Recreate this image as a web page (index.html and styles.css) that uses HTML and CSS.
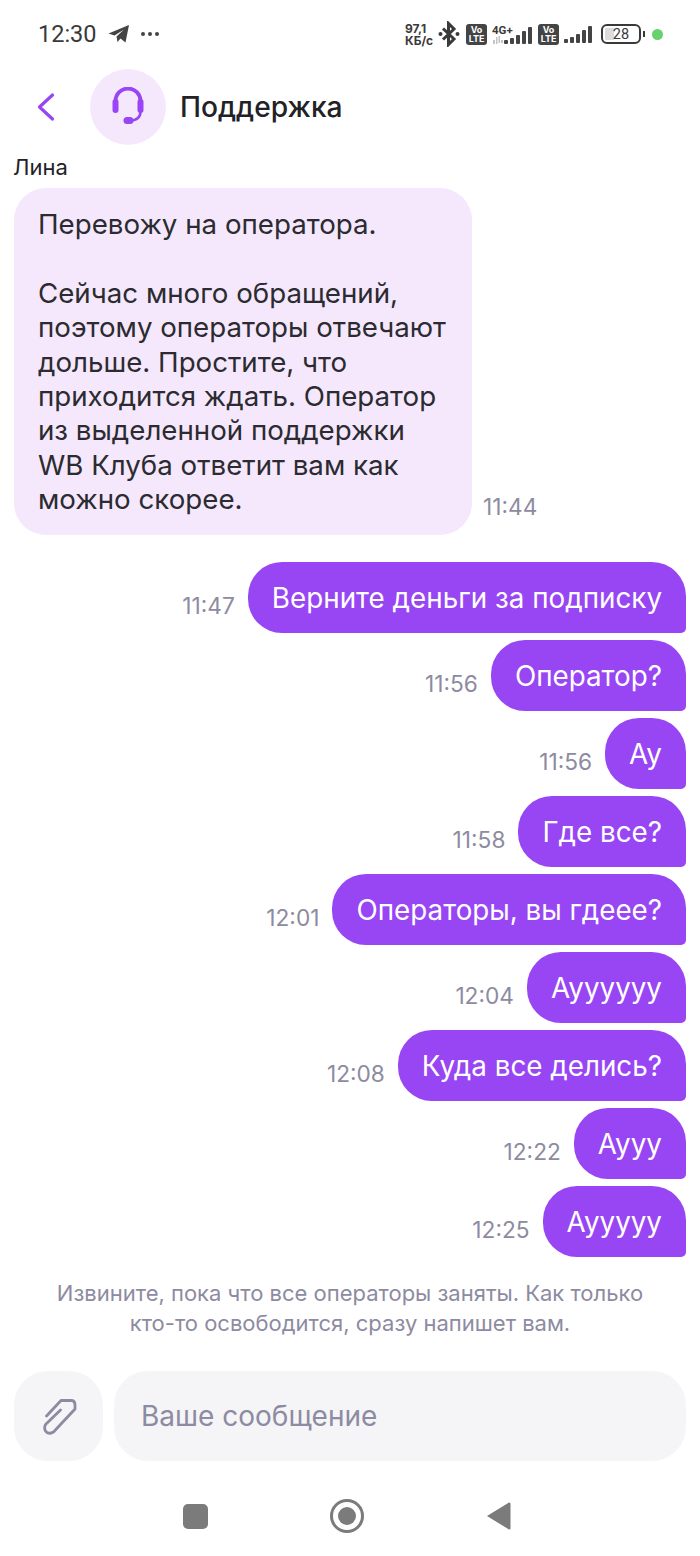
FILE: index.html
```html
<!DOCTYPE html>
<html lang="ru">
    <head>
        <meta charset="UTF-8">
        <meta name="viewport" content="width=device-width, initial-scale=1.0">
        <title>Поддержка</title>
        <link rel="stylesheet" href="styles.css">
    </head>
    <body>
        <div class="status-bar">
            <div class="status-left">
                <span class="clock">12:30</span>
                <svg class="tg-icon" width="22" height="20" viewBox="0 0 22 20"><path d="M0.5 9.5 L21 1 L17.500 18.500 L12.500 14.500 L9.500 18 L8.500 12.500 L16 5.500 L6.500 11.500 Z" fill="#444"/></svg>
                <span class="dots"><i></i><i></i><i></i></span>
            </div>
            <div class="status-right">
                <div class="speed"><span>97,1</span><span>КБ/с</span></div>
                <svg class="bt-icon" width="22" height="26" viewBox="0 0 22 26"><path d="M5 7.500 L16 18 L10.500 23.500 V2.500 L16 8 L5 18.500" fill="none" stroke="#3a3a3a" stroke-width="3"/><circle cx="2.500" cy="13" r="2" fill="#3a3a3a"/><circle cx="19.500" cy="13" r="2" fill="#3a3a3a"/></svg>
                <div class="volte"><span>Vo</span><span>LTE</span></div>
                <div class="net">
                    <span class="net-label">4G+</span>
                    <div class="net-row">
                        <svg width="11" height="8" viewBox="0 0 11 8"><path d="M1 4h2v4H1zM4 1h1.500v7H4zM6.500 0h1.500v7H6.500zM9 4h2v3H9z" fill="#c4c4c4"/></svg>
                        <div class="bars"><i class="b1"></i><i class="b2"></i><i class="b3"></i><i class="b4"></i><i class="b5"></i></div>
                    </div>
                </div>
                <div class="volte"><span>Vo</span><span>LTE</span></div>
                <div class="bars bars-big"><i class="b1"></i><i class="b2"></i><i class="b3"></i><i class="b4"></i><i class="b5"></i></div>
                <div class="battery"><div class="battery-fill"></div><span>28</span></div>
                <div class="battery-tip"></div>
                <div class="green-dot"></div>
            </div>
        </div>

        <div class="header">
            <svg class="back-icon" width="20" height="30" viewBox="0 0 20 30"><path d="M15.500 3 L2.500 15 L15.500 27" fill="none" stroke="#9846f3" stroke-width="3.200" stroke-linecap="round" stroke-linejoin="round"/></svg>
            <div class="avatar">
                <svg width="36" height="40" viewBox="0 0 36 40"><path d="M5.500 14 A12.500 12.500 0 0 1 30.500 14" fill="none" stroke="#9846f3" stroke-width="3.800"/><path d="M30.500 24 C30.500 31 26 33.500 20 33.500" fill="none" stroke="#9846f3" stroke-width="2.600"/><rect x="2.500" y="12" width="6" height="14" rx="3" fill="#9846f3"/><rect x="27.500" y="12" width="6" height="14" rx="3" fill="#9846f3"/><rect x="13.500" y="30" width="10" height="7" rx="3.500" fill="#9846f3"/></svg>
            </div>
            <div class="header-title">Поддержка</div>
        </div>

        <div class="chat">
            <div class="sender">Лина</div>
            <div class="msg-left">
                <div class="bubble-left">
                    <p>Перевожу на оператора.</p>
                    <p>Сейчас много обращений, поэтому операторы отвечают дольше. Простите, что приходится ждать. Оператор из выделенной поддержки WB Клуба ответит вам как можно скорее.</p>
                </div>
                <span class="time">11:44</span>
            </div>

            <div class="my-messages">
                <div class="msg-right"><span class="time">11:47</span><div class="bubble-right">Верните деньги за подписку</div></div>
                <div class="msg-right"><span class="time">11:56</span><div class="bubble-right">Оператор?</div></div>
                <div class="msg-right"><span class="time">11:56</span><div class="bubble-right">Ау</div></div>
                <div class="msg-right"><span class="time">11:58</span><div class="bubble-right">Где все?</div></div>
                <div class="msg-right"><span class="time">12:01</span><div class="bubble-right">Операторы, вы гдеее?</div></div>
                <div class="msg-right"><span class="time">12:04</span><div class="bubble-right">Ауууууу</div></div>
                <div class="msg-right"><span class="time">12:08</span><div class="bubble-right">Куда все делись?</div></div>
                <div class="msg-right"><span class="time">12:22</span><div class="bubble-right">Аууу</div></div>
                <div class="msg-right"><span class="time">12:25</span><div class="bubble-right">Аууууу</div></div>
            </div>

            <div class="notice">Извините, пока что все операторы заняты. Как только кто-то освободится, сразу напишет вам.</div>
        </div>

        <div class="input-row">
            <div class="attach">
                <svg width="38" height="40" viewBox="0 0 38 40"><path d="M6.500 20 L21 4.500 H31 Q35 4.500 35 9 V13 L13.500 36 Q8 39 5.500 35 Q3.500 31 6 28 L20.500 14" fill="none" stroke="#8d8ba1" stroke-width="2.800" stroke-linecap="round" stroke-linejoin="round"/></svg>
            </div>
            <div class="input-box">Ваше сообщение</div>
        </div>

        <div class="nav-bar">
            <div class="nav-square"></div>
            <div class="nav-circle"><div class="nav-circle-inner"></div></div>
            <svg width="26" height="30" viewBox="0 0 26 30"><path d="M1 15 L23 1.500 Q24.500 1 24.500 3 V27 Q24.500 29 23 28.500 Z" fill="#7b7b7b"/></svg>
        </div>
    </body>
</html>
```

FILE: styles.css
```css
*{
    box-sizing: border-box;
    font-family: Inter, "Noto Sans", sans-serif;
}

body{
    margin: 0;
    width: 700px;
    height: 1556px;
    background-color: white;
    overflow: hidden;
}

p{
    margin: 0;
}

.status-bar{
    height: 68px;
    padding: 0 37px 0 38px;
    display: flex;
    justify-content: space-between;
    align-items: center;
    color: #3a3a3a;
}

.status-left{
    display: flex;
    align-items: center;
}

.clock{
    font-family: Roboto, sans-serif;
    font-size: 23.5px;
    margin-right: 11px;
}

.tg-icon{
    margin-right: 11px;
}

.dots{
    display: flex;
    gap: 3px;
}

.dots i{
    width: 4px;
    height: 4px;
    border-radius: 50%;
    background-color: #444;
}

.status-right{
    display: flex;
    align-items: center;
}

.speed{
    display: flex;
    flex-direction: column;
    gap: 1px;
    width: 31px;
    font-family: Roboto, sans-serif;
    font-size: 12px;
    font-weight: 700;
    line-height: 11px;
    margin-right: 2px;
}

.bt-icon{
    margin-right: 6px;
}

.volte{
    width: 21px;
    height: 21px;
    border-radius: 3px;
    background-color: #444;
    color: white;
    display: flex;
    flex-direction: column;
    align-items: center;
    font-family: Roboto, sans-serif;
    font-size: 9px;
    font-weight: 700;
    line-height: 9px;
    padding-top: 1px;
    margin-right: 5px;
}

.net{
    width: 40px;
    margin-right: 6px;
    padding-top: 1px;
}

.net-label{
    display: block;
    font-family: Roboto, sans-serif;
    font-size: 11.5px;
    font-weight: 700;
    line-height: 10px;
}

.net-row{
    display: flex;
    align-items: flex-end;
    gap: 1px;
    margin-top: -8px;
}

.bars{
    display: flex;
    align-items: flex-end;
    gap: 2px;
}

.bars i{
    width: 4px;
    background-color: #444;
    border-radius: 1px;
}

.bars .b1{ height: 4px; }
.bars .b2{ height: 6px; }
.bars .b3{ height: 9px; }
.bars .b4{ height: 13px; }
.bars .b5{ height: 17px; }

.bars-big{
    margin-right: 9px;
}

.battery{
    position: relative;
    width: 40px;
    height: 20px;
    border: 2px solid #3a3a3a;
    border-radius: 6px;
    display: flex;
    align-items: center;
    justify-content: center;
}

.battery-fill{
    position: absolute;
    left: 2px;
    top: 2px;
    bottom: 2px;
    width: 9px;
    background-color: #dcdcdc;
    border-radius: 1px;
}

.battery span{
    position: relative;
    font-family: Roboto, sans-serif;
    font-size: 14.5px;
}

.battery-tip{
    width: 2px;
    height: 6px;
    margin-left: 2px;
    margin-right: 7px;
    background-color: #3a3a3a;
}

.green-dot{
    width: 11px;
    height: 11px;
    border-radius: 50%;
    background-color: #67d06f;
}

.header{
    height: 78px;
    padding-left: 37px;
    display: flex;
    align-items: center;
}

.back-icon{
    margin-right: 33px;
}

.avatar{
    width: 76px;
    height: 76px;
    border-radius: 50%;
    background-color: #f5e8fd;
    display: flex;
    align-items: center;
    justify-content: center;
    margin-right: 14px;
}

.header-title{
    font-size: 28.2px;
    font-weight: 500;
    color: #222226;
}

.chat{
    padding: 9px 14px 0;
}

.sender{
    margin-left: -1px;
    font-size: 22px;
    line-height: 24px;
    color: #222226;
    margin-bottom: 9px;
}

.msg-left{
    display: flex;
    align-items: flex-end;
    gap: 11px;
}

.bubble-left{
    width: 458px;
    height: 347px;
    padding: 19px 20px 0 24px;
    background-color: #f5e8fd;
    border-radius: 32px;
    font-size: 27.7px;
    line-height: 34.4px;
    color: #2b2b30;
}

.bubble-left p + p{
    margin-top: 34.4px;
}

.time{
    font-size: 22.7px;
    color: #8d8ba1;
    padding-bottom: 14px;
}

.msg-left .time{
    padding-bottom: 15px;
}

.my-messages{
    margin-top: 27px;
    display: flex;
    flex-direction: column;
    gap: 7px;
}

.msg-right{
    display: flex;
    justify-content: flex-end;
    align-items: flex-end;
    gap: 13px;
}

.bubble-right{
    height: 71px;
    padding: 0 24px;
    display: flex;
    align-items: center;
    background-color: #9846f3;
    color: white;
    font-size: 27.8px;
    border-radius: 34px 34px 5px 34px;
}

.notice{
    margin-top: 21px;
    padding: 0 40px;
    text-align: center;
    font-size: 22px;
    line-height: 30px;
    color: #8d8ba1;
}

.input-row{
    margin-top: 33px;
    padding: 0 14px;
    display: flex;
    gap: 11px;
}

.attach{
    width: 89px;
    height: 90px;
    border-radius: 34px;
    background-color: #f5f5f8;
    display: flex;
    align-items: center;
    justify-content: center;
}

.input-box{
    flex: 1;
    height: 90px;
    border-radius: 34px;
    background-color: #f5f5f8;
    display: flex;
    align-items: center;
    padding-left: 27px;
    font-size: 28px;
    color: #8d8ba1;
}

.nav-bar{
    margin-top: 38px;
    padding: 0 188px 0 183px;
    display: flex;
    justify-content: space-between;
    align-items: center;
}

.nav-square{
    width: 25px;
    height: 25px;
    border-radius: 5px;
    background-color: #7b7b7b;
}

.nav-circle{
    width: 34px;
    height: 34px;
    border-radius: 50%;
    border: 3px solid #7b7b7b;
    display: flex;
    align-items: center;
    justify-content: center;
}

.nav-circle-inner{
    width: 18px;
    height: 18px;
    border-radius: 50%;
    background-color: #7b7b7b;
}
```
